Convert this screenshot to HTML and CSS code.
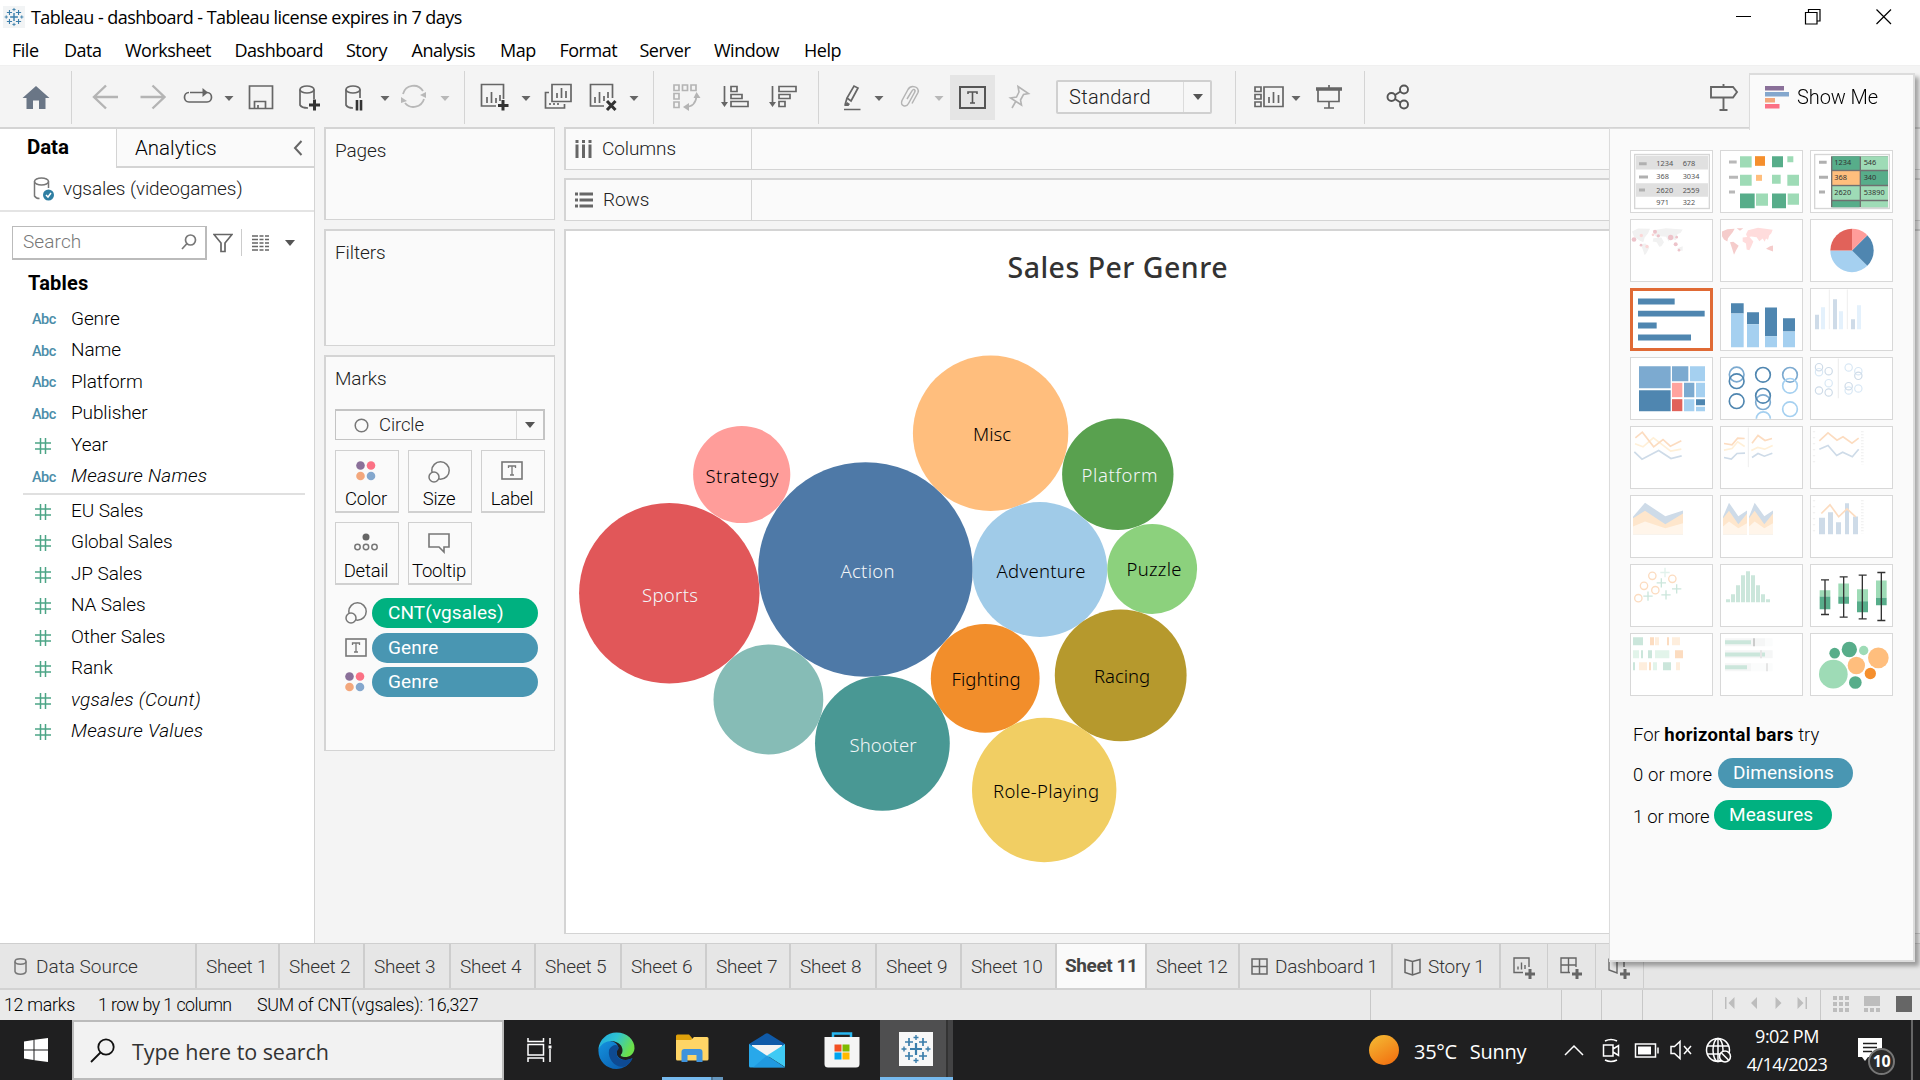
FILE: index.html
```html
<!DOCTYPE html>
<html lang="en">
<head>
<meta charset="utf-8">
<title>Tableau - dashboard</title>
<link rel="stylesheet" href="styles.css">
</head>
<body>
<svg class="defs" width="0" height="0">
  <symbol id="tableau" viewBox="0 0 34 34">
    <g fill="none" stroke="#3b7eab">
      <path stroke-width="2.2" d="M17 11v12M11 17h12"/>
      <path stroke-width="1.7" d="M10 6v8M6 10h8M24 6v8M20 10h8M10 20v8M6 24h8M24 20v8M20 24h8"/>
      <path stroke-width="1.4" d="M17 3v5M14.5 5.500h5M17 26v5M14.500 28.500h5M5 14.500v5M2.500 17h5M29 14.500v5M26.500 17h5"/>
    </g>
  </symbol>
  <symbol id="hash" viewBox="0 0 16 16"><path fill="none" stroke="#4ca586" stroke-width="1.500" d="M5.500 0v16M10.500 0v16M0 5h16M0 11h16"/></symbol>
  <symbol id="size" viewBox="0 0 22 22"><g fill="#fafafa" stroke="#777" stroke-width="1.500"><circle cx="12.500" cy="9.500" r="8.700"/><circle cx="6" cy="16" r="5"/></g></symbol>
  <symbol id="label" viewBox="0 0 22 19"><rect x="1" y="1" width="20" height="17" fill="none" stroke="#777" stroke-width="1.600"/><path fill="none" stroke="#777" stroke-width="1.300" d="M7.500 7V5h7v2M11 5v9M9 14h4"/></symbol>
  <symbol id="color" viewBox="0 0 20 20"><circle cx="4.500" cy="4.500" r="4.300" fill="#8a7099"/><circle cx="15" cy="4.500" r="4.300" fill="#fb7185"/><circle cx="4.500" cy="15" r="4.300" fill="#f3a77c"/><circle cx="15" cy="15" r="4.300" fill="#84a7cd"/></symbol>
</svg>

<header class="titlebar">
  <svg class="app-icon" width="22" height="22"><use href="#tableau"/></svg>
  <span class="title">Tableau - dashboard - Tableau license expires in 7 days</span>
  <svg class="win-buttons" width="184" height="33" viewBox="1736 0 184 33" fill="none" stroke="#000" stroke-width="1.200"><path d="M1736 16.500h15M1876.500 9.500l14.500 14.500M1891 9.500L1876.500 24M1808.500 12.500v-3h11.500v11.500h-3"/><path d="M1805.500 12.500h11.500v11.500h-11.500z"/></svg>
</header>
<nav class="menubar"><span>File</span><span>Data</span><span>Worksheet</span><span>Dashboard</span><span>Story</span><span>Analysis</span><span>Map</span><span>Format</span><span>Server</span><span>Window</span><span>Help</span></nav>

<div class="toolbar">
  <div class="group"><svg width="71" height="53" viewBox="0 71 71 53"><path fill="#6a7686" d="M36 86l13.500 12h-4v11h-6.500v-8.500h-6v8.500h-6.500V98h-4z"/></svg></div>
  <div class="group"><svg width="392" height="53" viewBox="72 71 392 53" fill="none" stroke="#666" stroke-width="1.700">
    <g stroke="#b4b4b4" stroke-width="2.400"><path d="M106 85.500L94 97l12 11.500M94 97h24M152.500 85.500L164.500 97l-12 11.500M164.500 97h-24"/></g>
    <path d="M190 92.500h15M207 92.500c6 0 6 9.500 0 9.500h-18c-6 0-6-9.500 0-9.500"/><path fill="#666" stroke="none" d="M202.500 88l5.500 4.500-5.500 4.500zM224.500 96h9l-4.500 5zM380.500 96h9l-4.500 5z"/>
    <path d="M249.500 86h23v22.500h-23zM254.500 108v-6.500h11v6.500M258 105v3.500"/>
    <ellipse cx="307" cy="89.500" rx="7" ry="3.500"/><path d="M300 89.500V105c1 2 4 3 8 3M314 89.500V99"/><path stroke="#333" stroke-width="3" d="M314.500 99.500v11M309 105h11"/>
    <ellipse cx="353" cy="89.500" rx="7" ry="3.500"/><path d="M346 89.500V105c1 2 4 3 7 3M360 89.500V98"/><path stroke="#333" stroke-width="2.600" d="M357 100v10.500M361 100v10.500"/>
    <path stroke="#b8b8b8" stroke-width="1.800" d="M403 94a11 11 0 0 1 20-3M424 99a11 11 0 0 1-19 4"/><path fill="#b8b8b8" stroke="none" d="M420 95l6-3v6zM401 103v-6l6 4zM440.500 96h9l-4.500 5z"/>
  </svg></div>
  <div class="group"><svg width="188" height="53" viewBox="465 71 188 53" fill="none" stroke="#666" stroke-width="1.700">
    <path d="M496 106h-14.500V84.500h22V99M487 103v-6M491.500 103V92M496 103v-5M500 101V95"/><path stroke="#333" stroke-width="3" d="M503 100v10.500M498 105.500h10.500"/><path fill="#666" stroke="none" d="M521.500 96h9l-4.500 5zM629.500 96h9l-4.500 5z"/>
    <path d="M552 84.500h19v17h-19zM549 92.500h-3.500V108h19v-4M557 98v-5M561.500 98V88M566 98v-7M550 105v-2M554 105v-2M558 105v-2"/>
    <path d="M604 106h-13.500V84.500h22V98M595 103v-6M599.500 103V92M604 101v-5M608 98v-6"/><path stroke="#333" stroke-width="3" d="M607 101l8.500 9M615.500 101l-8.500 9"/>
  </svg></div>
  <div class="group"><svg width="164" height="53" viewBox="654 71 164 53" fill="none" stroke="#666" stroke-width="1.700">
    <g stroke="#b4b4b4"><path d="M674 85h5v5.500h-5zM682.500 85h5v5.500h-5zM691 85h5v5.500h-5zM674 93.500h5v5.500h-5zM674 102h5v5.500h-5zM685 107c7 0 11-4 11.500-11"/><path fill="#b4b4b4" stroke="none" d="M683 107l6-4v8zM696.500 92l4 6h-7z"/></g>
    <path d="M724.500 86v18M731 86.500h6v5h-6zM731 94.500h11v4h-11zM731 101.500h17v5h-17zM772.500 86v18M779 86.500h17v5h-17zM779 94.500h11v4h-11zM779 101.500h6v5h-6z"/><path fill="#666" stroke="none" d="M721 102h7l-3.500 5zM769 102h7l-3.500 5z"/>
  </svg></div>
  <div class="group format">
    <svg width="131" height="53" viewBox="819 71 131 53" fill="none" stroke="#666" stroke-width="1.700"><path d="M851 101l7-13-4-2-7 12zM847 98l-2 7M844 109.500h16.500"/><path fill="#666" stroke="none" d="M844 106l3-4 3 2-1.500 2zM874.500 96h9l-4.500 5z"/><path stroke="#b4b4b4" stroke-width="1.500" d="M907 99l5-8c1.500-3 4-1 2.500 1.500l-6 11c-2 4-9 3-6.500-3l6-11c3-5 12-3 10 3l-6 11"/><path fill="#b8b8b8" stroke="none" d="M934.500 96h9l-4.500 5z"/></svg>
    <span class="active"><svg width="27" height="23" viewBox="0 0 27 23" fill="none" stroke="#555"><path stroke-width="2" d="M1 1h25v21H1z"/><path stroke-width="1.600" d="M9 8V6h9v2M13.500 6v11M11 17h5"/></svg></span>
    <svg width="61" height="53" viewBox="995 71 61 53" fill="none" stroke="#b4b4b4" stroke-width="1.600"><path d="M1018 86.500l10.500 7-5 1-3 5.500 1 5-11-7 6-1 2.500-5zM1016 101l-4 7"/></svg>
    <span class="select"><span>Standard</span><i class="caret"></i></span>
  </div>
  <div class="group"><svg width="128" height="53" viewBox="1236 71 128 53" fill="none" stroke="#666" stroke-width="1.700"><path d="M1255 87h6v4.500h-6zM1255 94.500h6v4.500h-6zM1255 102h6v4.500h-6zM1264 87h19v19.500h-19zM1269 103v-6M1273.500 103V92M1278.500 103V95M1318 90v11.500h21V90M1329 101v7M1324 108h10M1329 85v3"/><path stroke-width="3.500" d="M1316 89h26"/><path fill="#666" stroke="none" d="M1291.500 96h9l-4.500 5z"/></svg></div>
  <div class="group last"><svg width="384" height="53" viewBox="1365 71 384 53" fill="none" stroke="#555" stroke-width="1.900"><circle cx="1391.500" cy="97" r="4"/><circle cx="1404" cy="89.500" r="4"/><circle cx="1404" cy="104.500" r="4"/><path d="M1395 95l5.500-3.500M1395 99l5.500 3.500"/><path stroke="#666" d="M1711 87h22l4 5-4 5.500h-22zM1723.500 84v3M1723.500 97.500v12.500M1719.500 110h8"/></svg></div>
</div>

<main class="workspace">
  <aside class="data-pane">
    <div class="pane-tabs"><b>Data</b><span>Analytics<svg width="10" height="16" viewBox="0 0 10 16"><path fill="none" stroke="#666" stroke-width="2" d="M8.500 1L2 8l6.500 7"/></svg></span></div>
    <div class="source"><svg width="22" height="24" viewBox="0 0 22 24" fill="none" stroke="#777" stroke-width="1.500"><ellipse cx="8.500" cy="4.500" rx="7" ry="3.500"/><path d="M1.500 4.500V19c1 1.500 3 2.500 5 2.500M15.500 4.500V11"/><circle cx="15.500" cy="18" r="5.500" fill="#2f7fa3" stroke="none"/><path stroke="#fff" d="M13 18l2 2 3-4"/></svg><span>vgsales (videogames)</span></div>
    <div class="search-row">
      <div class="search"><span>Search</span><svg width="16" height="16" viewBox="0 0 16 16"><g fill="none" stroke="#777" stroke-width="1.700"><circle cx="9.500" cy="6" r="5"/><path d="M6 9.500L1 15"/></g></svg></div>
      <svg class="funnel" width="20" height="20" viewBox="0 0 20 20"><path fill="none" stroke="#666" stroke-width="1.700" d="M1 1.500h18l-7 8.500v8.500H8V10z"/></svg>
      <span class="rule"></span>
      <svg class="list" width="18" height="16" viewBox="0 0 18 16"><path stroke="#666" stroke-width="1.700" stroke-dasharray="6 1.500 4 1.500 4 1" d="M0 1h18M0 4.500h18M0 8h18M0 11.500h18M0 15h18"/></svg>
      <i class="caret"></i>
    </div>
    <h2>Tables</h2>
    <ul class="fields">
      <li><b>Abc</b>Genre</li><li><b>Abc</b>Name</li><li><b>Abc</b>Platform</li><li><b>Abc</b>Publisher</li>
      <li><svg><use href="#hash"/></svg>Year</li><li class="it"><b>Abc</b>Measure Names</li>
    </ul>
    <ul class="fields measures">
      <li><svg><use href="#hash"/></svg>EU Sales</li><li><svg><use href="#hash"/></svg>Global Sales</li><li><svg><use href="#hash"/></svg>JP Sales</li><li><svg><use href="#hash"/></svg>NA Sales</li><li><svg><use href="#hash"/></svg>Other Sales</li><li><svg><use href="#hash"/></svg>Rank</li><li class="it"><svg><use href="#hash"/></svg>vgsales (Count)</li><li class="it"><svg><use href="#hash"/></svg>Measure Values</li>
    </ul>
  </aside>

  <section class="cards">
    <div class="card pages">Pages</div>
    <div class="card filters">Filters</div>
    <div class="card marks">Marks
      <div class="mark-type"><svg width="15" height="15" viewBox="0 0 15 15"><circle cx="7.500" cy="7.500" r="6.300" fill="none" stroke="#777" stroke-width="1.500"/></svg><span>Circle</span><i class="caret"></i></div>
      <div class="mark-buttons">
        <div><svg width="20" height="20"><use href="#color"/></svg>Color</div>
        <div><svg width="22" height="22"><use href="#size"/></svg>Size</div>
        <div><svg width="22" height="19"><use href="#label"/></svg>Label</div>
        <div><svg width="24" height="18" viewBox="0 0 24 18"><circle cx="12" cy="4" r="3.500" fill="#666"/><g fill="none" stroke="#777" stroke-width="1.500"><circle cx="3.500" cy="14" r="2.700"/><circle cx="12" cy="14" r="2.700"/><circle cx="20.500" cy="14" r="2.700"/></g></svg>Detail</div>
        <div><svg width="22" height="21" viewBox="0 0 22 21"><path fill="none" stroke="#777" stroke-width="1.600" d="M1 1h20v13h-5v5l-5-5H1z"/></svg>Tooltip</div>
      </div>
      <div class="pills">
        <svg width="22" height="22"><use href="#size"/></svg><span class="pill green">CNT(vgsales)</span>
        <svg width="22" height="19"><use href="#label"/></svg><span class="pill">Genre</span>
        <svg width="20" height="20"><use href="#color"/></svg><span class="pill">Genre</span>
      </div>
    </div>
  </section>

  <section class="view">
    <div class="shelf"><div><svg width="17" height="18" viewBox="0 0 17 18"><path stroke="#666" stroke-width="3" stroke-dasharray="3 1.500 14" d="M2 0v18M8.500 0v18M15 0v18"/></svg>Columns</div></div>
    <div class="shelf"><div><svg width="18" height="16" viewBox="0 0 18 16"><path stroke="#666" stroke-width="3" stroke-dasharray="3 1.500 14" d="M0 2h18M0 8h18M0 14h18"/></svg>Rows</div></div>
    <div class="sheet">
      <svg width="1045" height="701" viewBox="566 231 1045 701" text-anchor="middle">
        <text class="chart-title" x="1117.500" y="277.500" textLength="220">Sales Per Genre</text>
        <circle cx="741.700" cy="474.500" r="48.600" fill="#ff9d9a"/><circle cx="669.300" cy="593.300" r="90.200" fill="#e15759"/><circle cx="865.500" cy="569.500" r="107.300" fill="#4e79a7"/><circle cx="990.600" cy="433.300" r="77.700" fill="#ffbe7d"/><circle cx="1117.800" cy="474.300" r="55.700" fill="#59a14f"/><circle cx="1039.800" cy="569.500" r="67.400" fill="#a0cbe8"/><circle cx="1152.200" cy="569" r="44.900" fill="#8cd17d"/><circle cx="1120.700" cy="675.300" r="65.900" fill="#b6992d"/><circle cx="985.200" cy="678.300" r="54.400" fill="#f28e2b"/><circle cx="1044.200" cy="790" r="72.200" fill="#f1ce63"/><circle cx="882.400" cy="743.300" r="67.400" fill="#499894"/><circle cx="768.400" cy="699.500" r="54.900" fill="#86bcb6"/>
        <g class="mark-label">
          <text x="742" y="483" textLength="73">Strategy</text><text x="992" y="441" textLength="38">Misc</text><text x="1041" y="578" textLength="89">Adventure</text><text x="1154" y="576" textLength="55">Puzzle</text><text x="1122" y="683" textLength="56">Racing</text><text x="986" y="686" textLength="69">Fighting</text><text x="1046" y="798" textLength="106">Role-Playing</text>
          <g fill="#f3f6f8"><text x="670" y="602" textLength="56">Sports</text><text x="867.500" y="578" textLength="54">Action</text><text x="1119.500" y="482" textLength="76">Platform</text><text x="883" y="752" textLength="67">Shooter</text></g>
        </g>
      </svg>
    </div>
  </section>
</main>

<div class="sheet-tabs">
  <span class="ds"><svg width="13" height="17" viewBox="0 0 13 17" fill="none" stroke="#777" stroke-width="1.500"><ellipse cx="6.500" cy="3.500" rx="5.500" ry="2.700"/><path d="M1 3.500v10c1 3.500 10 3.500 11 0v-10"/></svg>Data Source</span>
  <span>Sheet 1</span><span>Sheet 2</span><span>Sheet 3</span><span>Sheet 4</span><span>Sheet 5</span><span>Sheet 6</span><span>Sheet 7</span><span>Sheet 8</span><span>Sheet 9</span><span>Sheet 10</span><span class="on">Sheet 11</span><span>Sheet 12</span>
  <span class="ic"><svg width="17" height="17" viewBox="0 0 17 17"><path fill="none" stroke="#666" stroke-width="1.500" d="M1 1h15v15H1zM8.500 1v15M1 8.500h15"/></svg>Dashboard 1</span>
  <span class="ic"><svg width="17" height="18" viewBox="0 0 17 18"><path fill="none" stroke="#666" stroke-width="1.500" d="M1 1.500l7.500 2 7.500-2v13l-7.500 2.500L1 14.500zM8.500 3.500V17"/></svg>Story 1</span>
  <span class="new"><svg width="22" height="23" viewBox="0 0 22 23" fill="none" stroke="#666" stroke-width="1.400"><path d="M10 15.500H1V1h15v9M5 12.500v-3M8.500 12.500v-7M12 12V8"/><path stroke-width="3" d="M17 12v10M12 17h10"/></svg></span>
  <span class="new"><svg width="22" height="23" viewBox="0 0 22 23" fill="none" stroke="#666" stroke-width="1.400"><path d="M10 15.500H1V1h15v9M1 8h15M8.500 1v14.500"/><path stroke-width="3" d="M17 12v10M12 17h10"/></svg></span>
  <span class="new"><svg width="22" height="23" viewBox="0 0 22 23" fill="none" stroke="#666" stroke-width="1.400"><path d="M1 1.500l8 2 7-2V10M1 1.500V13l8 3V3.500"/><path stroke-width="3" d="M17 12v10M12 17h10"/></svg></span>
  <span class="rest"></span>
</div>

<footer class="status">
  <span>12 marks</span><span class="rows">1 row by 1 column</span><span>SUM of CNT(vgsales): 16,327</span>
  <i></i><i></i><i></i><i></i>
  <i><svg width="107" height="29" viewBox="1713 991 107 29" fill="#bdbdbd"><path d="M1725 998h1.500v12h-1.500zM1734.500 998v12l-6-6zM1757 998v12l-6-6zM1775.500 998v12l6-6zM1797.500 998v12l6-6zM1805.500 998h1.500v12h-1.500z"/></svg></i>
  <i><svg width="99" height="29" viewBox="1821 991 99 29" fill="#bdbdbd"><path d="M1833 997h4v4h-4zM1839 997h4v4h-4zM1845 997h4v4h-4zM1833 1003h4v4h-4zM1839 1003h4v4h-4zM1845 1003h4v4h-4zM1833 1009h4v4h-4zM1839 1009h4v4h-4zM1845 1009h4v4h-4zM1864 997h16v10h-16zM1864 1009h4v4h-4zM1870 1009h4v4h-4zM1876 1009h4v4h-4z"/><path fill="#666" d="M1896 997h16v16h-16z"/></svg></i>
</footer>

<div class="taskbar">
  <span class="start"><svg width="24" height="24" viewBox="0 0 24 24" fill="#fff"><path d="M0 3.500l9.500-1.500v9.500H0zM10.500 1.800L24 0v11.500H10.500zM0 12.500h9.500V22L0 20.500zM10.500 12.500H24V24l-13.500-1.800z"/></svg></span>
  <div class="tsearch"><svg width="25" height="25" viewBox="0 0 25 25"><g fill="none" stroke="#111" stroke-width="1.800"><circle cx="16" cy="9" r="7.700"/><path d="M10.500 14.500L1 24"/></g></svg><span>Type here to search</span></div>
  <span class="app"><svg width="25" height="24" viewBox="0 0 25 24" fill="none" stroke="#fff" stroke-width="1.500"><path d="M1 0v3.500h15.500V0M1 24v-4h15.500v4M1 6.500h15.500v10.500H1zM23 0v6M23 11v13"/><path stroke-width="3" d="M23 7.500v3"/></svg></span>
  <span class="app"><svg width="37" height="37" viewBox="0 0 37 37"><defs><linearGradient id="eg" x1="0" y1="0" x2="1" y2="0.400"><stop offset="0" stop-color="#1ea7e0"/><stop offset=".5" stop-color="#2fc4d3"/><stop offset="1" stop-color="#6be04a"/></linearGradient><linearGradient id="eb" x1="0" y1="0" x2="1" y2="1"><stop offset="0" stop-color="#1493df"/><stop offset="1" stop-color="#0a55a8"/></linearGradient></defs><path fill="url(#eb)" d="M.5 17c1-6 6-9 11-8 5 0 8 3 9 7-3 3-2 8 1 10 4 3 9 2 13 0-3 7-9 11-16 11C8 37-.5 28 .5 17z"/><path fill="#0e4a92" d="M11 18c1-3 4-5 7-5 2 1 3 2 2.500 4-3 3-2 8 1 9.500 4 2.500 9 1.500 13 0-2 4-5 7-8 8-9 2-17-7-15.500-16.500z"/><path fill="url(#eg)" d="M.5 17C1 8 9 .5 18.500.5 29 .5 37 8 36.500 16.500c-.5 6-5 8.500-9.500 8.500-3 0-5-1-4-2.500 2-2 2-6 0-9C17 6 5 8 .5 17z"/></svg></span>
  <span class="app explorer"><svg width="33" height="29" viewBox="0 0 33 29"><path fill="#dfa10b" d="M0 2q0-1.500 1.500-1.500H13l3 3.500v3H0z"/><path fill="#ffd566" d="M0 6h15l3-3h13q1.500 0 1.500 1.500V25q0 1.500-1.500 1.500H1.500Q0 26.500 0 25z"/><path fill="#3f93dd" d="M5.500 28V18q0-3 3-3h15q3 0 3 3v10h-6v-7h-9v7z"/></svg></span>
  <span class="app"><svg width="36" height="35" viewBox="0 0 36 35"><path fill="#0f5aa8" d="M0 11L16 1q2-1.300 4 0l16 10v4H0z"/><path fill="#f3f3f3" d="M3 12h30v8L18 24 3 20z"/><path fill="#28a8ea" d="M0 11l36 23.500H1.500Q0 34.500 0 33z"/><path fill="#3fcaf4" d="M36 11v23L18 22.500z"/><path fill="#1a8fd8" d="M18 22.500L36 34.500H4z" opacity=".6"/></svg></span>
  <span class="app"><svg width="36" height="36" viewBox="0 0 36 36"><path fill="none" stroke="#27b7f0" stroke-width="2.500" d="M9 7V1.500h18V7"/><path fill="#f4f4f4" d="M.5 5h35v27q0 3.500-3.500 3.500H4Q.5 35.500.5 32z"/><path fill="#f25022" d="M10.500 12.500h7v7h-7z"/><path fill="#7fba00" d="M18.500 12.500h7v7h-7z"/><path fill="#00a4ef" d="M10.500 20.500h7v7h-7z"/><path fill="#ffb900" d="M18.500 20.500h7v7h-7z"/></svg></span>
  <span class="app current"><svg width="34" height="34"><rect width="34" height="34" fill="#f7f7f7"/><use href="#tableau"/></svg></span>
  <div class="weather"><i></i><span>35°C</span><span>Sunny</span></div>
  <svg class="tray" width="170" height="60" viewBox="1563 1020 170 60" fill="none" stroke="#fff" stroke-width="1.500"><path d="M1565 1055l9-9 9 9M1603.500 1045h9.500v11h-9.500zM1613 1049l5.500-3.500v10L1613 1052M1605 1041q6-3 12 0M1605 1060q6 3 12 0M1635.500 1044h20v13h-20zM1658 1047.500v6"/><path fill="#fff" stroke="none" d="M1638 1046.500h13v8h-13z"/><path d="M1671 1046.500h3.500l5.500-5v17l-5.500-5h-3.500zM1684 1046l7 8M1691 1046l-7 8"/><circle cx="1718" cy="1050" r="11.500"/><ellipse cx="1718" cy="1050" rx="5" ry="11.500"/><path d="M1707 1046h22M1707 1054h15M1718 1038.500v23"/><circle cx="1725" cy="1056.500" r="5.500" fill="#1f1f1f"/><path d="M1721.500 1053l7 7"/></svg>
  <div class="clock"><span>9:02 PM</span><span>4/14/2023</span></div>
  <div class="notify"><svg width="25" height="27" viewBox="0 0 25 27"><path fill="#fff" d="M0 0h24v19H10l-3 4-3-4H0z"/><path stroke="#1f1f1f" stroke-width="1.600" d="M5 5.500h14M5 9.500h14M5 13.500h9"/></svg><b>10</b></div>
</div>

<aside class="showme">
  <div class="showme-tab"><svg width="24" height="23"><path fill="#8a7099" d="M0 0h19v4.500H0z"/><path fill="#84a7cd" d="M0 6h24v4.500H0z"/><path fill="#f3a77c" d="M0 12h10v4.500H0z"/><path fill="#fb7185" d="M0 18h14.500v4.500H0z"/></svg><span>Show Me</span></div>
  <div class="showme-body">
    <div class="thumbs">
      <svg viewBox="90 60 249 188"><rect x="104" y="73" width="224" height="162" fill="#fff" stroke="#d6d6d6" stroke-width="4"/><path fill="#e0e0e0" d="M108 77h216v41H108zM108 159h216v41H108z"/><path fill="#b0b0b0" d="M117 96h23v9h-23zM117 136h27v9h-27zM117 175h18v9h-18z"/><g class="tiny"><text x="169" y="107">1234</text><text x="248" y="107">678</text><text x="169" y="147">368</text><text x="248" y="147">3034</text><text x="169" y="188">2620</text><text x="248" y="188">2559</text><text x="169" y="224">971</text><text x="248" y="224">322</text></g></svg>
      <svg viewBox="360 60 249 188"><path fill="#b8b8b8" d="M387 91h23v9h-23zM387 137h27v9h-27zM387 181h18v9h-18z"/><path fill="#9edbb6" d="M420 78h35v34h-35zM562 78h18v18h-18zM420 134h35v33h-35zM516 134h26v27h-26zM562 134h35v33h-35zM468 190h36v37h-36zM563 190h34v34h-34z"/><path fill="#57ad8a" d="M516 78h33v33h-33zM420 190h44v44h-44zM516 190h42v44h-42z"/><path fill="#f58f2d" d="M465 78h30v29h-30z"/><path fill="#ffbe7d" d="M468 134h18v18h-18z"/></svg>
      <svg viewBox="630 60 249 188"><rect x="644" y="73" width="224" height="162" fill="#fff" stroke="#d6d6d6" stroke-width="4"/><path fill="#b0b0b0" d="M657 92h23v9h-23zM657 137h27v9h-27zM657 181h18v9h-18z"/><path fill="#707070" d="M693 78h171v153H693z"/><path fill="#57ad8a" d="M697 78h82v41h-82zM783 123h81v41h-81zM697 213h82v18h-82z"/><path fill="#9edbb6" d="M783 78h81v41h-81zM697 168h82v41h-82zM783 168h81v41h-81zM783 213h81v18h-81z"/><path fill="#ffbe7d" d="M697 123h82v41h-82z"/><g class="tiny dark"><text x="703" y="104">1234</text><text x="791" y="104">546</text><text x="703" y="151">368</text><text x="791" y="151">340</text><text x="703" y="196">2620</text><text x="791" y="196">53890</text></g></svg>
      <svg viewBox="90 267 249 188"><path fill="#f1f1f1" d="M96 304l18-9 36 1-6 14-10 12-4 14-10-4-18-12zM122 342l14-2 12 12-8 16-6 7-6-18zM158 300l40-6 50 4-6 10-10 4-4 18-8-2-6-8-8 14-8-14-16-2-10 4-8-6zM160 324l24-2 8 14-8 12-6 2-8-14-12-2zM232 354l16-6v14l-14-2z"/><g fill="#edc3ca"><circle cx="102" cy="328" r="7"/><circle cx="212" cy="322" r="8"/><circle cx="165" cy="305" r="6"/><circle cx="175" cy="317" r="5"/><circle cx="227" cy="342" r="6"/><circle cx="230" cy="321" r="4"/><circle cx="123" cy="345" r="4"/><circle cx="237" cy="360" r="4"/></g><g fill="#fbd7d7"><circle cx="124" cy="316" r="5"/><circle cx="141" cy="349" r="5"/><circle cx="159" cy="314" r="4"/></g></svg>
      <svg viewBox="360 267 249 188"><path fill="#f5cccb" d="M366 304l16-7 22-1-6 10-6 8-8 10-2 10-10-6-6-10zM410 294h20l-10 8zM390 336l10-1 16 12-8 14-6 13-6-20zM498 356l12-8 9-2v18l-10-4z"/><path fill="#ffdcdc" d="M428 322l20-2 12 14-6 14-6 12-8-2-2-18-10-6zM438 312l6-12 30-7 44 6-4 10-6 6-4 14-6-4-4 10-6-10-10 8-8-12-16-2-12 2z"/></svg>
      <svg viewBox="630 267 249 188"><path fill="#a5d0f0" d="M756 361H691a65 65 0 0 0 111 46z"/><path fill="#4f86b0" d="M756 361l46 46a65 65 0 0 0 0-92z"/><path fill="#ff9d9a" d="M756 361V296a65 65 0 0 1 46 19z"/><path fill="#e1625a" d="M756 361H691a65 65 0 0 1 65-65z"/></svg>
      <svg class="sel" viewBox="90 474 249 188"><path fill="#4f86b0" d="M114 505h110v18H114zM114 542h200v17H114zM114 577h56v18H114zM114 613h159v18H114z"/></svg>
      <svg viewBox="360 474 249 188"><path fill="#4f86b0" d="M393 519h38v31h-38zM441 546h36v36h-36zM495 532h36v86h-36zM549 564h36v40h-36z"/><path fill="#a5d0f0" d="M393 550h38v101h-38zM441 582h36v69h-36zM495 618h36v33h-36zM549 604h36v47h-36z"/></svg>
      <svg viewBox="630 474 249 188"><path fill="#cedbe8" d="M645 554h12v43h-12zM699 507h12v90h-12zM753 567h12v30h-12z"/><path fill="#e4f1fc" d="M663 531h12v66h-12zM717 543h12v54h-12zM771 525h12v72h-12z"/><path stroke="#eee" stroke-width="3" d="M688 478v119M742 478v119"/></svg>
      <svg viewBox="90 681 249 188"><path fill="#7caad0" d="M117 708h95v66h-95zM216 708h49v45h-49zM252 758h31v43h-31z"/><path fill="#4f86b0" d="M117 780h95v63h-95zM288 807h27v18h-27z"/><path fill="#a5d0f0" d="M270 708h45v45h-45zM288 758h27v43h-27zM252 807h31v36h-31zM288 830h27v13h-27z"/><path fill="#ffa39e" d="M216 758h31v43h-31z"/><path fill="#e1625a" d="M216 807h31v36h-31z"/></svg>
      <svg viewBox="360 681 249 188" fill="none" stroke-width="5"><g stroke="#7caad0"><circle cx="410" cy="733" r="22"/><circle cx="489" cy="816" r="22"/><circle cx="570" cy="734" r="22"/></g><g stroke="#4f86b0"><circle cx="410" cy="753" r="22"/><circle cx="410" cy="813" r="22"/><circle cx="489" cy="734" r="22"/><circle cx="489" cy="797" r="22"/></g><g stroke="#a5d0f0"><circle cx="570" cy="767" r="22"/><circle cx="570" cy="837" r="22"/><path d="M469 866a21 21 0 0 1 42 0"/></g></svg>
      <svg viewBox="630 681 249 188" fill="none" stroke-width="3.500"><g stroke="#d9e8f5"><circle cx="657" cy="726" r="11"/><circle cx="686" cy="759" r="11"/><circle cx="746" cy="712" r="11"/><circle cx="775" cy="723" r="11"/><circle cx="775" cy="775" r="11"/><circle cx="746" cy="781" r="11"/></g><g stroke="#cedbe8"><circle cx="657" cy="711" r="11"/><circle cx="686" cy="723" r="11"/><circle cx="657" cy="781" r="11"/><circle cx="686" cy="787" r="11"/><circle cx="775" cy="737" r="11"/><circle cx="746" cy="768" r="11"/></g><path stroke="#eee" d="M715 685v119"/></svg>
      <svg viewBox="90 18 249 188" fill="none" stroke-width="5"><path stroke="#fff0d8" d="M105 71l24 9 31-27 52 40 32-6"/><path stroke="#fcdcc0" d="M106 53l21-17 34 44 28-22 22 20 33-16"/><path stroke="#cedbe8" d="M103 95l23 22 50-26 37 24 32-8"/></svg>
      <svg viewBox="360 18 249 188" fill="none" stroke-width="5"><path stroke="#fff0d8" d="M372 90l24-5 17-20 21 14M454 91l19-9 21 5 24-11"/><path stroke="#fcdcc0" d="M372 70l24 4 17-20 21 1M456 69l18-23 21 15 21-6"/><path stroke="#cedbe8" d="M372 112l22 5 17-17 24-1M456 112l18-12 19 8 24-9"/><path stroke="#eee" stroke-width="3" d="M445 22v119"/></svg>
      <svg viewBox="630 18 249 188" fill="none" stroke-width="5"><path stroke="#fcdcc0" d="M658 62l26-24 27 22 18-10 27 19 20-15"/><path stroke="#cedbe8" d="M658 87l26-11 26 30 18-10 29 14 19-23"/><path stroke="#eee" stroke-width="7" stroke-dasharray="3 15" d="M642 33v100"/><path stroke="#eee" stroke-width="8" stroke-dasharray="3 6" d="M787 33v100"/></svg>
      <svg viewBox="90 225 249 188"><path fill="#cedbe8" d="M99 290l36-42 61 40 53-17v71H99z"/><path fill="#fee6cc" d="M99 294l36-22 61 40 53-32v62H99z"/><path fill="#fff5ea" d="M99 319l36-15 61 20 53-15v33H99z"/></svg>
      <svg viewBox="360 225 249 188"><path fill="#cedbe8" d="M369 290l18-42 28 40 26-17v71h-72zM447 290l17-42 29 40 26-17v71h-72z"/><path fill="#fee6cc" d="M369 294l18-22 28 40 26-32v62h-72zM447 294l17-22 29 40 26-32v62h-72z"/><path fill="#fff5ea" d="M369 319l18-15 28 20 26-15v33h-72zM447 319l17-15 29 20 26-15v33h-72z"/></svg>
      <svg viewBox="630 225 249 188" fill="none"><path fill="#cedbe8" d="M657 293h18v49h-18zM684 276h15v66h-15zM708 306h15v36h-15zM735 249h12v93h-12zM759 289h15v53h-15z"/><path stroke="#fcdcc0" stroke-width="5" d="M664 280l26-26 26 36 25-24 26 24"/><path stroke="#eee" stroke-width="7" stroke-dasharray="3 15" d="M642 240v100"/><path stroke="#eee" stroke-width="8" stroke-dasharray="3 6" d="M787 240v100"/></svg>
      <svg viewBox="90 432 249 188" fill="none" stroke-width="4"><g stroke="#fcdcc0"><circle cx="157" cy="467" r="11"/><circle cx="217" cy="476" r="11"/><circle cx="132" cy="497" r="11"/><circle cx="166" cy="510" r="11"/><circle cx="115" cy="534" r="11"/></g><path stroke="#cbe6db" d="M184 474v28M170 488h28M230 492v28M216 506h28M144 514v28M130 528h28M198 510v28M184 524h28"/><path stroke="#e2f2ec" d="M195 443v28M181 457h28"/></svg>
      <svg viewBox="360 432 249 188"><path fill="#cbe6db" d="M378 537h12v9h-12zM393 522h12v24h-12zM408 495h12v51h-12zM423 465h12v81h-12zM438 453h12v93h-12zM453 465h12v81h-12zM468 495h12v51h-12zM483 522h12v24h-12zM498 537h12v9h-12z"/></svg>
      <svg viewBox="630 432 249 188"><path fill="#9edbb6" d="M659 510h32v19h-32zM715 490h32v39h-32zM771 507h33v36h-33zM828 481h32v52h-32z"/><path fill="#57ad8a" d="M659 529h32v38h-32zM715 529h32v22h-32zM771 543h33v33h-33zM828 533h32v22h-32z"/><path fill="none" stroke="#333" stroke-width="4" d="M675 479v104M663 479h24M663 583h24M731 470v121M719 470h24M719 591h24M787 465v131M776 465h24M776 596h24M844 457v144M832 457h24M832 601h24"/></svg>
      <svg viewBox="90 639 249 188"><path fill="#cbe6db" d="M99 651h30v24H99zM123 690h6v24h-6zM144 690h12v24h-12zM99 726h6v24h-6zM189 726h24v24h-24z"/><path fill="#e2f4ea" d="M99 690h18v24H99zM165 690h43v24h-43zM159 726h12v24h-12z"/><path fill="#fcdcc0" d="M150 651h12v24h-12zM201 651h6v24h-6zM225 690h24v24h-24zM147 726h6v24h-6z"/><path fill="#feeedd" d="M165 651h12v24h-12zM216 651h24v24h-24zM117 726h24v24h-24zM228 726h12v24h-12z"/></svg>
      <svg viewBox="360 639 249 188"><path fill="#f5f6f6" d="M375 654h120v24H375zM375 690h143v24H375zM375 729h78v24h-78z"/><path fill="#fbfcfc" d="M495 654h23v24h-23zM453 729h65v24h-65z"/><path fill="#cbe6db" d="M375 660h78v12h-78zM375 697h120v12H375zM375 735h66v12h-66z"/><path fill="#ccc" d="M459 654h6v24h-6z"/><path fill="#e5e5e5" d="M480 690h6v24h-6zM498 729h6v24h-6z"/></svg>
      <svg viewBox="630 639 249 188"><g fill="#57ad8a"><circle cx="704" cy="699" r="16"/><circle cx="748" cy="688" r="23"/><circle cx="766" cy="787" r="19"/></g><g fill="#9edbb6"><circle cx="700" cy="762" r="43"/><circle cx="791" cy="691" r="14"/></g><g fill="#ffbe7d"><circle cx="835" cy="713" r="31"/><circle cx="769" cy="736" r="26"/></g><circle cx="811" cy="760" r="17" fill="#f58f2d"/></svg>
    </div>
    <p class="hint">For <b>horizontal bars</b> try</p>
    <p class="need"><span class="count">0 or more</span><span class="pill dim">Dimensions</span></p>
    <p class="need second"><span class="count">1 or more</span><span class="pill green mea">Measures</span></p>
  </div>
</aside>
</body>
</html>
```
FILE: styles.css
```css
* { box-sizing: border-box; }
body {
  margin: 0; width: 1920px; height: 1080px; overflow: hidden; position: relative;
  display: flex; flex-direction: column; background: #f4f4f4; color: #000;
  font: 300 19px/22px Roboto, "Liberation Sans", sans-serif; letter-spacing: -0.1px;
}
body > * { flex: none; }
svg { display: block; flex: none; }
.defs { position: absolute; }
ul, h2, p { margin: 0; padding: 0; list-style: none; }
.caret { width: 0; height: 0; border: 5px solid transparent; border-top: 6px solid #555; border-bottom: 0; }

.titlebar, .menubar { background: #fff; height: 33px; font: 400 18px/24px "Open Sans", "Noto Sans", sans-serif; letter-spacing: -0.5px; color: #000; }
.titlebar { display: flex; align-items: center; padding: 1px 0 0 3px; letter-spacing: -0.55px; }
.app-icon { background: #f2f4f5; margin-right: 6px; }
.win-buttons { margin: -1px 0 0 auto; }
.menubar { display: grid; grid-template-columns: 52px 61px 109.5px 111.5px 65.5px 88.500px 59.500px 80px 74.500px 90px 60px; padding: 5px 0 0 12px; border-bottom: 1px solid #f0f0f0; }

.toolbar { height: 61px; display: flex; padding-top: 5px; }
.group { height: 53px; border-right: 1px solid #d4d4d4; display: flex; align-items: center; }
.group.last { border: 0; }
.active { width: 45px; height: 45px; background: #e5e5e5; display: flex; align-items: center; justify-content: center; }
.select { width: 156px; height: 34px; margin-right: 23px; border: 2px solid #d0d0d0; border-radius: 2px; background: #f7f7f7; display: flex; align-items: center; padding-left: 11px; color: #222; font-size: 20px; letter-spacing: 0.3px; margin-top: -2px; }
.select span { width: 115px; height: 30px; line-height: 30px; border-right: 1px solid #dcdcdc; margin-right: 9px; }

.workspace { height: 816px; display: flex; }
.data-pane { width: 315px; background: #fff; border-right: 1px solid #d4d4d4; }
.pane-tabs { display: flex; height: 41px; border-top: 2px solid #d4d4d4; }
.pane-tabs b { width: 116px; padding: 7px 0 0 27px; font-size: 20.500px; font-weight: 700; }
.pane-tabs span { flex: 1; display: flex; align-items: center; justify-content: space-between; background: #fafafa; border: solid #d4d4d4; border-width: 0 0 2px 1px; padding: 0 11px 0 18px; height: 39px; font-size: 20.500px; letter-spacing: 0; }
.source { height: 44px; display: flex; align-items: center; gap: 8px; padding-left: 33px; border-bottom: 2px solid #e4e4e4; color: #222; }
.search-row { display: flex; align-items: center; height: 61px; padding-left: 12px; }
.search { width: 195px; height: 34px; border: 1px solid #bbb; border-width: 1px 2px 2px 1px; display: flex; align-items: center; justify-content: space-between; padding: 0 8px 0 10px; color: #777; letter-spacing: 0.1px; }
.funnel { margin: 0 8px 0 6px; }
.rule { width: 1px; height: 27px; background: #ccc; margin-right: 10px; }
.list { margin-right: 15px; }
h2 { font: 700 20px/22px Roboto, sans-serif; letter-spacing: 0.2px; margin: -1px 0 9px 28px; color: #000; }
.fields li { height: 31.500px; display: flex; align-items: center; }
.fields b { width: 39px; margin-left: 32px; font-size: 14.500px; font-weight: 500; color: #4b8da9; letter-spacing: -0.5px; padding-top: 3px; }
.fields svg { width: 16px; height: 16px; margin: 2px 20px 0 35px; }
.fields .it { font-style: italic; letter-spacing: 0.25px; }
.fields .it b { font-style: normal; letter-spacing: -0.5px; }
.measures { border-top: 2px solid #e0e0e0; margin: 0 9px 0 23px; }
.fields:not(.measures) { height: 190px; }
.measures li { margin-left: -23px; }

.cards { width: 231px; margin: 0 9px; display: flex; flex-direction: column; gap: 9px; }
.card { background: #fafafa; border: solid #d4d4d4; border-width: 2px 1px 1px 2px; padding: 11px 9px; color: #222; }
.pages { height: 93px; }
.filters { height: 117px; }
.marks { height: 396px; }
.mark-type { margin-top: 19px; width: 210px; height: 31px; border: 1px solid #c4c4c4; border-width: 2px 2px 1px 1px; display: flex; align-items: center; padding-left: 18px; }
.mark-type span { margin-left: 10px; width: 138px; border-right: 1px solid #d8d8d8; height: 28px; line-height: 28px; font-size: 18.500px; }
.mark-type .caret { margin-left: 8px; }
.mark-buttons { margin-top: 10px; display: grid; grid-template-columns: repeat(3, 64px); gap: 9px; }
.mark-buttons div { height: 63px; border: 1px solid #d0d0d0; border-bottom-width: 2px; display: flex; flex-direction: column; align-items: center; justify-content: space-between; padding: 10px 2px 1px 0; font-size: 18.500px; letter-spacing: -0.2px; color: #000; }
.pills { margin: 13px 0 0 10px; display: grid; grid-template-columns: 27px 166px; row-gap: 4.500px; align-items: center; }
.pill { height: 30px; border-radius: 15px; background: #4996b2; color: #fff; padding-left: 16px; line-height: 29px; font-weight: 400; letter-spacing: 0.1px; }
.green { background: #00b180; }

.view { flex: 1; }
.shelf { height: 43px; border: solid #d4d4d4; border-width: 2px 0 1px 2px; background: #fafafa; margin-bottom: 8px; color: #222; }
.shelf div { width: 186px; height: 40px; border-right: 1px solid #d4d4d4; display: flex; align-items: center; gap: 10px; padding-left: 9px; }
.sheet { background: #fff; border: solid #d4d4d4; border-width: 2px 0 1px 2px; height: 705px; }
.chart-title { font: 500 28.500px "Noto Sans", sans-serif; fill: #333; letter-spacing: 0; }
.mark-label { font: 300 18.500px "Noto Sans", sans-serif; fill: #000; letter-spacing: 0; }

.sheet-tabs { height: 47px; background: #e6e6e6; border-top: 1px solid #cfcfcf; border-bottom: 2px solid #d2d2d2; display: grid; grid-template-columns: 197px 83px 85px 86px 85px 86px 85px 84px 86px 85px 95px 90px 93px 153px 108px 47px 48px 48px 1fr; color: #333; letter-spacing: -0.2px; }
.sheet-tabs > span { border-right: 2px solid #cdcdcd; display: flex; align-items: center; padding: 1px 0 0 9px; white-space: nowrap; }
.sheet-tabs .ds { padding-left: 14px; gap: 9px; letter-spacing: 0; }
.sheet-tabs .on { background: #fafafa; font-weight: 700; color: #444; letter-spacing: -0.4px; padding: 0 0 1px 8px; }
.sheet-tabs .ic { padding-left: 11px; gap: 7px; letter-spacing: -0.3px; }
.sheet-tabs .new { padding: 4px 0 0 12px; border-right-width: 1px; }
.sheet-tabs .rest { border: 0; }

.status { height: 30px; background: #eaeaea; display: grid; grid-template-columns: 94px 159px 1113px 191px 40px 41px 70px 108px 100px; padding-left: 4px; font-size: 17.800px; line-height: 30px; letter-spacing: -0.25px; white-space: nowrap; }
.status .rows { letter-spacing: -0.55px; }
.status i { border-left: 1px solid #c8c8c8; }
.status i:first-of-type { grid-column: 4; }

.taskbar { height: 60px; background: #1f1f20; display: flex; align-items: center; color: #fff; font: 400 18px/22px "Open Sans", sans-serif; letter-spacing: -0.5px; }
.start { width: 72px; padding-left: 24px; }
.tsearch { width: 432px; height: 60px; border: 2px solid #bbb; background: #f2f2f2; display: flex; align-items: center; gap: 17px; padding-left: 16px; color: #333; font-size: 21.500px; letter-spacing: -0.05px; }
.tsearch span { padding-top: 4px; }
.app { width: 75px; height: 60px; display: flex; align-items: center; justify-content: center; }
.tsearch + .app { padding-right: 4px; }
.explorer { width: 61px; margin: 0 7px 0 8px; border: solid #76b9ed; border-width: 0 0 3px; border-image: linear-gradient(90deg, #76b9ed 78%, #4f7594 78%, #4f7594 81%, #6596bd 81%) 3; }
.explorer + .app, .explorer + .app + .app { padding-right: 2px; }
.current { background: linear-gradient(90deg, #4f4f50 66px, #333 66px, #333 68px, #434344 68px); border-bottom: 3px solid #76b9ed; width: 73px; padding-right: 2px; }
.weather { margin-left: 416px; width: 194px; display: flex; align-items: center; font-size: 20px; }
.weather i { width: 30px; height: 30px; border-radius: 50%; background: linear-gradient(150deg, #f4bd35, #f26a0d); margin-right: 15px; }
.weather span { margin-right: 13px; padding-top: 4px; letter-spacing: -0.3px; }
.clock { width: 108px; display: flex; flex-direction: column; align-items: center; line-height: 28px; }
.notify { position: relative; height: 60px; width: 72px; padding: 18px 0 0 17px; border-right: 2px solid #666; }
.notify b { position: absolute; left: 27px; top: 28px; width: 27px; height: 27px; border-radius: 50%; border: 2px solid #777; background: #2c2c2c; font-size: 16px; line-height: 22px; text-align: center; }

.showme { position: absolute; left: 1609px; top: 73px; width: 306px; filter: drop-shadow(4px 4px 2px rgba(0,0,0,.33)); }
.showme-tab { margin-left: 140px; height: 57px; background: #fafafa; border: solid #dcdcdc; border-width: 2px 2px 0 1px; display: flex; align-items: center; gap: 8px; padding: 0 0 11px 15px; font-size: 20px; position: relative; }
.showme-body { height: 834px; margin-top: -2px; background: #fafafa; border: solid #dcdcdc; border-width: 1px 2px 2px 1px; padding: 21px 0 0 20px; }
.thumbs { display: grid; grid-template-columns: repeat(3, 83px); gap: 6px 7px; }
.thumbs svg { width: 83px; height: 63px; background: #fff; outline: 1px solid #d8d8d8; outline-offset: -1px; }
.thumbs .sel { outline: 3px solid #e06a35; outline-offset: -3px; }
.tiny { font: 400 22px "Noto Sans", sans-serif; fill: #555; letter-spacing: 0; }
.dark { fill: #333; }
.hint { margin: 28px 0 0 3px; font-size: 18.500px; letter-spacing: 0; }
.hint b { font-weight: 700; letter-spacing: 0.3px; }
.need { margin: 12px 0 0 3px; height: 30px; display: flex; align-items: center; font-size: 18.500px; letter-spacing: 0.1px; }
.need .count { width: 85px; padding-top: 3px; }
.need.second .count { width: 81px; letter-spacing: -0.2px; }
.need .pill { font-size: 19px; padding-left: 15px; }
.dim { width: 135px; }
.mea { width: 118px; }
```
